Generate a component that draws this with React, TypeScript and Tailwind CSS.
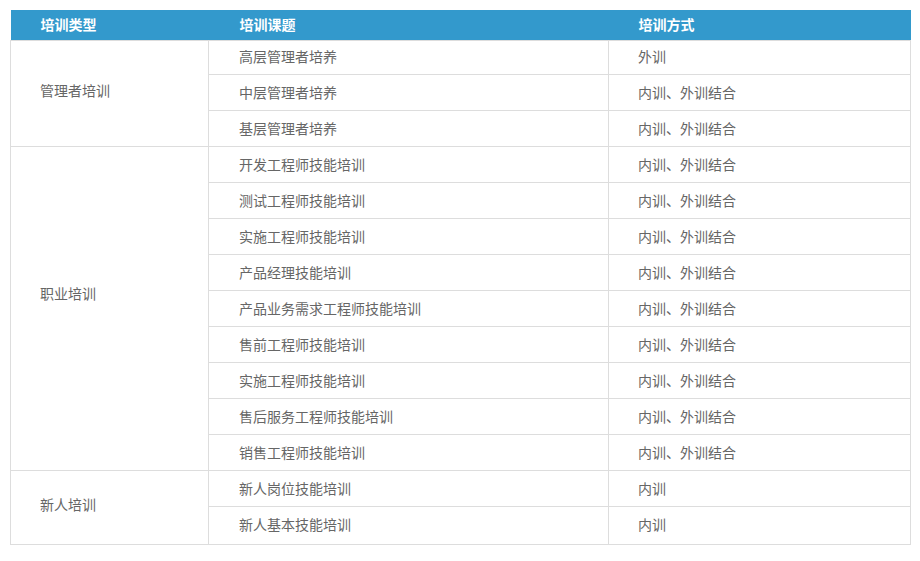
import React from 'react';

type Group = { type: string; pad: string; rows: [string, string][] };

const groups: Group[] = [
  {
    type: '管理者培训',
    pad: 'pb-[6px]',
    rows: [
      ['高层管理者培养', '外训'],
      ['中层管理者培养', '内训、外训结合'],
      ['基层管理者培养', '内训、外训结合'],
    ],
  },
  {
    type: '职业培训',
    pad: 'pb-[30px]',
    rows: [
      ['开发工程师技能培训', '内训、外训结合'],
      ['测试工程师技能培训', '内训、外训结合'],
      ['实施工程师技能培训', '内训、外训结合'],
      ['产品经理技能培训', '内训、外训结合'],
      ['产品业务需求工程师技能培训', '内训、外训结合'],
      ['售前工程师技能培训', '内训、外训结合'],
      ['实施工程师技能培训', '内训、外训结合'],
      ['售后服务工程师技能培训', '内训、外训结合'],
      ['销售工程师技能培训', '内训、外训结合'],
    ],
  },
  {
    type: '新人培训',
    pad: 'pb-[6px]',
    rows: [
      ['新人岗位技能培训', '内训'],
      ['新人基本技能培训', '内训'],
    ],
  },
];

export default function App() {
  return (
    <div
      className="w-[920px] h-[561px] bg-white pt-[10px] pl-[10px]"
      style={{ fontFamily: '"Microsoft YaHei", "Noto Sans CJK SC", sans-serif' }}
    >
      <table className="w-[900px] border-collapse table-fixed text-[14px] text-[#666]">
        <colgroup>
          <col className="w-[198px]" />
          <col className="w-[400px]" />
          <col className="w-[302px]" />
        </colgroup>
        <thead>
          <tr className="h-[30px] bg-[#3399cc] text-white font-bold text-left">
            <th className="pl-[30px] p-0 font-bold">培训类型</th>
            <th className="pl-[31px] p-0 font-bold">培训课题</th>
            <th className="pl-[30px] p-0 font-bold">培训方式</th>
          </tr>
        </thead>
        <tbody>
          {groups.map((g, gi) =>
            g.rows.map(([topic, mode], i) => {
              const first = gi === 0 && i === 0;
              const last = gi === groups.length - 1 && i === g.rows.length - 1;
              const cell = first
                ? 'border border-[#dddddd] p-0 pb-[1px]'
                : last
                  ? 'border border-[#dddddd] p-0 pb-[2px]'
                  : 'border border-[#dddddd] p-0';
              return (
                <tr key={g.type + i} className={first ? 'h-[34px]' : last ? 'h-[38px]' : 'h-[36px]'}>
                  {i === 0 && (
                    <td rowSpan={g.rows.length} className={`border border-[#dddddd] pl-[29px] p-0 align-middle ${g.pad}`}>
                      {g.type}
                    </td>
                  )}
                  <td className={`${cell} pl-[30px]`}>{topic}</td>
                  <td className={`${cell} pl-[29px]`}>{mode}</td>
                </tr>
              );
            })
          )}
        </tbody>
      </table>
    </div>
  );
}
